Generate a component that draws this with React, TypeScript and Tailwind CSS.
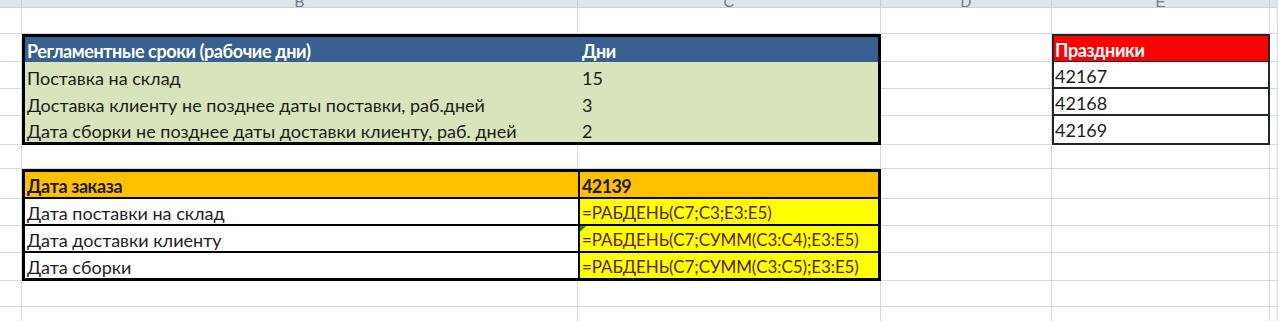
import type { ReactNode } from "react";

const GRID = "border-r border-b border-[#d5d9e5]";

const W = {
  a: "w-[22px]",
  b: "w-[556px]",
  c: "w-[303px]",
  d: "w-[171px]",
  e: "w-[218px]",
};

const Cell = ({ w, cls = GRID, children }: { w: string; cls?: string; children?: ReactNode }) => (
  <div className={`${w} shrink-0 h-full flex items-end overflow-hidden whitespace-nowrap leading-[22px] ${cls}`}>
    {children}
  </div>
);

const Rest = ({ cls = GRID }: { cls?: string }) => <div className={`flex-1 h-full ${cls}`} />;

// plain empty row across the whole sheet
const EmptyRow = ({ h }: { h: string }) => (
  <div className={`flex ${h}`}>
    <Cell w={W.a} />
    <Cell w={W.b} />
    <Cell w={W.c} />
    <Cell w={W.d} />
    <Cell w={W.e} />
    <Rest />
  </div>
);

const ColLetter = ({ w, letter }: { w: string; letter?: string }) => (
  <div className={`${w} shrink-0 h-full flex justify-center items-end overflow-hidden border-r border-[#c3cddb] text-[15px] leading-[11px] text-[#6b7a8e] font-['Liberation_Sans',sans-serif]`}>
    {letter}
  </div>
);

const BLUE = "bg-[#376091] text-white font-bold tracking-[-0.4px]";
const GREEN = "bg-[#d8e4bc] text-[#1c1c1c]";
const HOLIDAY = "bg-white border-l-2 border-r-2 border-b-2 border-[#262626] text-[#1c1c1c] pl-[1px]";
const LABEL = "bg-white border-l-[3px] border-b-2 border-black text-[#241c27] pl-[2px]";
const FORMULA = "bg-[#ffff00] border-l-2 border-r-[3px] border-b-2 border-black text-[#62220e] text-[17px] tracking-[-0.1px] pl-[2px]";

export default function App() {
  return (
    <div className="w-[1278px] h-[321px] overflow-hidden bg-white font-['Lato','Liberation_Sans',sans-serif] text-[18px]">
      {/* column header strip, mostly scrolled away */}
      <div className="flex h-[8px] bg-[#dfe5ee] border-b border-[#c7d0dd]">
        <ColLetter w={W.a} />
        <ColLetter w={W.b} letter="B" />
        <ColLetter w={W.c} letter="C" />
        <ColLetter w={W.d} letter="D" />
        <ColLetter w={W.e} letter="E" />
        <div className="flex-1" />
      </div>

      <EmptyRow h="h-[26px]" />

      {/* Регламентные сроки / Праздники headers */}
      <div className="flex h-[28px]">
        <Cell w={W.a} />
        <Cell w={W.b} cls={`${BLUE} border-t-[3px] border-l-[3px] border-black pl-[2px]`}>
          Регламентные сроки (рабочие дни)
        </Cell>
        <Cell w={W.c} cls={`${BLUE} border-t-[3px] border-r-[3px] border-black pl-[4px]`}>
          Дни
        </Cell>
        <Cell w={W.d} />
        <Cell w={W.e} cls="bg-[#ff0000] text-white font-bold tracking-[-0.4px] border-t-2 border-x-2 border-b border-[#262626] pl-[1px]">
          Праздники
        </Cell>
        <Rest />
      </div>

      <div className="flex h-[27px]">
        <Cell w={W.a} />
        <Cell w={W.b} cls={`${GREEN} border-l-[3px] border-black pl-[2px]`}>Поставка на склад</Cell>
        <Cell w={W.c} cls={`${GREEN} border-r-[3px] border-black pl-[4px]`}>15</Cell>
        <Cell w={W.d} />
        <Cell w={W.e} cls={HOLIDAY}>42167</Cell>
        <Rest />
      </div>

      <div className="flex h-[27px]">
        <Cell w={W.a} />
        <Cell w={W.b} cls={`${GREEN} border-l-[3px] border-black pl-[2px]`}>
          Доставка клиенту не позднее даты поставки, раб.дней
        </Cell>
        <Cell w={W.c} cls={`${GREEN} border-r-[3px] border-black pl-[4px]`}>3</Cell>
        <Cell w={W.d} />
        <Cell w={W.e} cls={HOLIDAY}>42168</Cell>
        <Rest />
      </div>

      <div className="flex h-[29px]">
        <Cell w={W.a} />
        <Cell w={W.b} cls={`${GREEN} border-l-[3px] border-b-[3px] border-black pl-[2px]`}>
          Дата сборки не позднее даты доставки клиенту, раб. дней
        </Cell>
        <Cell w={W.c} cls={`${GREEN} border-r-[3px] border-b-[3px] border-black pl-[4px]`}>2</Cell>
        <Cell w={W.d} />
        <Cell w={W.e} cls={`${HOLIDAY} pb-[2px]`}>42169</Cell>
        <Rest />
      </div>

      <EmptyRow h="h-[24px]" />

      {/* order dates */}
      <div className="flex h-[30px]">
        <Cell w={W.a} />
        <Cell w={W.b} cls="bg-[#ffc000] font-bold tracking-[-0.4px] text-[#1c1c1c] border-t-[3px] border-l-[3px] border-b-2 border-black pl-[2px]">
          Дата заказа
        </Cell>
        <Cell w={W.c} cls="bg-[#ffc000] font-bold tracking-[-0.6px] text-[#1c1c1c] border-t-[3px] border-l-2 border-r-[3px] border-b-2 border-black pl-[2px]">
          42139
        </Cell>
        <Cell w={W.d} />
        <Cell w={W.e} />
        <Rest />
      </div>

      <div className="flex h-[27px]">
        <Cell w={W.a} />
        <Cell w={W.b} cls={LABEL}>Дата поставки на склад</Cell>
        <Cell w={W.c} cls={FORMULA}>=РАБДЕНЬ(C7;C3;E3:E5)</Cell>
        <Cell w={W.d} />
        <Cell w={W.e} />
        <Rest />
      </div>

      <div className="flex h-[27px]">
        <Cell w={W.a} />
        <Cell w={W.b} cls={LABEL}>Дата доставки клиенту</Cell>
        <Cell w={W.c} cls={`${FORMULA} relative`}>
          <span className="absolute left-0 top-0 w-0 h-0 border-t-[6px] border-t-[#1d8a3c] border-r-[6px] border-r-transparent" />
          =РАБДЕНЬ(C7;СУММ(C3:C4);E3:E5)
        </Cell>
        <Cell w={W.d} />
        <Cell w={W.e} />
        <Rest />
      </div>

      <div className="flex h-[28px]">
        <Cell w={W.a} />
        <Cell w={W.b} cls={`${LABEL} border-b-[3px]`}>Дата сборки</Cell>
        <Cell w={W.c} cls={`${FORMULA} border-b-[3px]`}>=РАБДЕНЬ(C7;СУММ(C3:C5);E3:E5)</Cell>
        <Cell w={W.d} />
        <Cell w={W.e} />
        <Rest />
      </div>

      <EmptyRow h="h-[26px]" />
      <EmptyRow h="h-[27px]" />
    </div>
  );
}
